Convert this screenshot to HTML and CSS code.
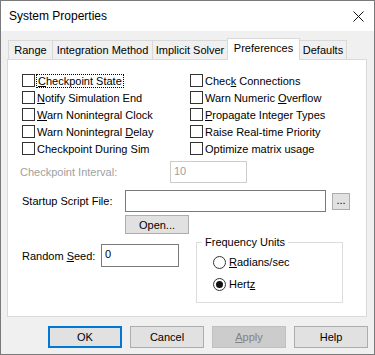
FILE: index.html
```html
<!DOCTYPE html>
<html lang="en">
<head>
  <meta charset="UTF-8" />
  <title>System Properties</title>
  <link rel="stylesheet" href="styles.css">
</head>
<body>
  <div class="window">
    <div class="titlebar">
      <span class="title">System Properties</span>
      <svg class="close" width="11" height="11" viewBox="0 0 11 11">
        <path d="M0.5 0.5 L10.5 10.5 M10.5 0.5 L0.5 10.5" stroke="#111" stroke-width="1" fill="none"/>
      </svg>
    </div>

    <div class="tabs">
      <div class="tab tab-range">Range</div>
      <div class="tab tab-integration">Integration Method</div>
      <div class="tab tab-implicit">Implicit Solver</div>
      <div class="tab tab-active">Preferences</div>
      <div class="tab tab-defaults">Defaults</div>
    </div>

    <div class="panel">
      <div class="checks">
        <label class="check"><span class="box"></span><span class="focus"><u>C</u>heckpoint State</span></label>
        <label class="check"><span class="box"></span><span>Chec<u>k</u> Connections</span></label>
        <label class="check"><span class="box"></span><span><u>N</u>otify Simulation End</span></label>
        <label class="check"><span class="box"></span><span>Warn Numeric <u>O</u>verflow</span></label>
        <label class="check"><span class="box"></span><span><u>W</u>arn Nonintegral Clock</span></label>
        <label class="check"><span class="box"></span><span><u>P</u>ropagate Integer Types</span></label>
        <label class="check"><span class="box"></span><span>Warn Nonintegral <u>D</u>elay</span></label>
        <label class="check"><span class="box"></span><span>Raise Real-time Priority</span></label>
        <label class="check"><span class="box"></span><span>Checkpoint During Sim</span></label>
        <label class="check"><span class="box"></span><span>Optimize matrix usage</span></label>
      </div>

      <div class="row interval-row">
        <span class="label label-disabled">Checkpoint Interval:</span>
        <div class="field field-disabled field-interval">10</div>
      </div>

      <div class="row script-row">
        <span class="label label-script">Startup Script File:</span>
        <div class="field field-script"></div>
        <div class="btn btn-browse">...</div>
      </div>

      <div class="open-row">
        <div class="btn btn-open">Open...</div>
      </div>

      <div class="bottom-row">
        <div class="seed">
          <span class="label label-seed">Random <u>S</u>eed:</span>
          <div class="field field-seed">0</div>
        </div>
        <fieldset class="group">
          <legend>Frequency Units</legend>
          <label class="radio"><span class="circle"></span><span><u>R</u>adians/sec</span></label>
          <label class="radio"><span class="circle checked"></span><span>Hert<u>z</u></span></label>
        </fieldset>
      </div>
    </div>

    <div class="buttons">
      <div class="btn btn-dialog btn-default">OK</div>
      <div class="btn btn-dialog">Cancel</div>
      <div class="btn btn-dialog btn-disabled"><u>A</u>pply</div>
      <div class="btn btn-dialog">Help</div>
    </div>
  </div>
</body>
</html>
```

FILE: styles.css
```css
* {
  box-sizing: border-box;
}
body {
  margin: 0;
  font-family: 'Liberation Sans', Arial, sans-serif;
  font-size: 11px;
  color: #000;
  background: #fff;
}
u {
  text-decoration: underline;
  text-underline-offset: 1px;
}
.window {
  width: 375px;
  height: 355px;
  border: 1px solid #7a7a7a;
  background: #f0f0f0;
  display: flex;
  flex-direction: column;
}
.titlebar {
  height: 30px;
  background: #fff;
  display: flex;
  align-items: center;
  justify-content: space-between;
  padding: 0 10px 0 8px;
}
.title {
  font-size: 12px;
  color: #000;
}
.close {
  margin-top: 1px;
}

/* tabs */
.tabs {
  display: flex;
  align-items: flex-end;
  height: 21px;
  margin-top: 7px;
  padding-left: 7px;
  position: relative;
  z-index: 1;
}
.tab {
  height: 19px;
  border: 1px solid #d9d9d9;
  border-bottom: none;
  border-left: none;
  background: #f0f0f0;
  display: flex;
  align-items: center;
  justify-content: center;
  white-space: nowrap;
}
.tab-range {
  width: 45px;
  border-left: 1px solid #d9d9d9;
}
.tab-integration {
  width: 100px;
}
.tab-implicit {
  width: 75px;
}
.tab-active {
  width: 73px;
  height: 22px;
  margin-bottom: -1px;
  margin-left: -1px;
  border-left: 1px solid #d9d9d9;
  background: #fff;
  padding-bottom: 3px;
}
.tab-defaults {
  width: 47px;
}

/* panel */
.panel {
  width: 360px;
  height: 258px;
  margin-left: 6px;
  border: 1px solid #d9d9d9;
  background: #fff;
  padding: 12px 0 0 0;
}
.checks {
  display: grid;
  grid-template-columns: 168px auto;
  padding-left: 14px;
}
.check {
  display: flex;
  align-items: center;
  height: 17px;
  gap: 2px;
  white-space: nowrap;
}
.box {
  width: 13px;
  height: 13px;
  border: 1px solid #333;
  background: #fff;
  flex: none;
}
.focus {
  outline: 1px dotted #000;
  outline-offset: 0;
  padding: 0 1px;
}
.row {
  display: flex;
  align-items: center;
}
.label {
  white-space: nowrap;
}
.label-disabled {
  color: #a0a0a0;
}
.interval-row {
  margin-top: 4px;
  padding-left: 12px;
}
.interval-row .label {
  width: 150px;
}
.field {
  height: 22px;
  border: 1px solid #7a7a7a;
  background: #fff;
  padding: 3px 0 0 3px;
}
.field-disabled {
  border-color: #cccccc;
  color: #a0a0a0;
}
.field-interval {
  width: 77px;
}
.script-row {
  margin-top: 7px;
  padding-left: 14px;
}
.label-script {
  width: 103px;
}
.field-script {
  width: 201px;
}
.btn {
  background: #e1e1e1;
  border: 1px solid #adadad;
  display: flex;
  align-items: center;
  justify-content: center;
  white-space: nowrap;
}
.btn-browse {
  width: 18px;
  height: 17px;
  margin-left: 6px;
  padding-bottom: 3px;
}
.open-row {
  padding-left: 117px;
  margin-top: 3px;
}
.btn-open {
  width: 64px;
  height: 19px;
}
.bottom-row {
  display: flex;
  align-items: flex-start;
  margin-top: 2px;
}
.seed {
  display: flex;
  align-items: center;
  padding-left: 14px;
  margin-top: 8px;
  width: 188px;
}
.label-seed {
  width: 79px;
}
.field-seed {
  width: 78px;
  height: 23px;
}
.group {
  width: 147px;
  height: 67px;
  margin: 0;
  padding: 2px 0 0 0;
  border: 1px solid #dcdcdc;
  min-width: 0;
}
.group legend {
  padding: 0 3px;
  margin-left: 5px;
  font-size: 11px;
  line-height: 13px;
}
.radio {
  display: flex;
  align-items: center;
  height: 22px;
  gap: 3px;
  margin-left: 16px;
}
.circle {
  width: 13px;
  height: 13px;
  border: 1px solid #333;
  border-radius: 50%;
  background: #fff;
  flex: none;
  display: flex;
  align-items: center;
  justify-content: center;
}
.circle.checked::after {
  content: "";
  width: 7px;
  height: 7px;
  border-radius: 50%;
  background: #111;
}

/* dialog buttons */
.buttons {
  display: flex;
  justify-content: flex-end;
  gap: 8px;
  margin-top: 9px;
  padding-right: 6px;
}
.btn-dialog {
  width: 74px;
  height: 22px;
}
.btn-default {
  border: 2px solid #0078d7;
}
.btn-disabled {
  background: #cccccc;
  border-color: #bfbfbf;
  color: #838383;
}
```
